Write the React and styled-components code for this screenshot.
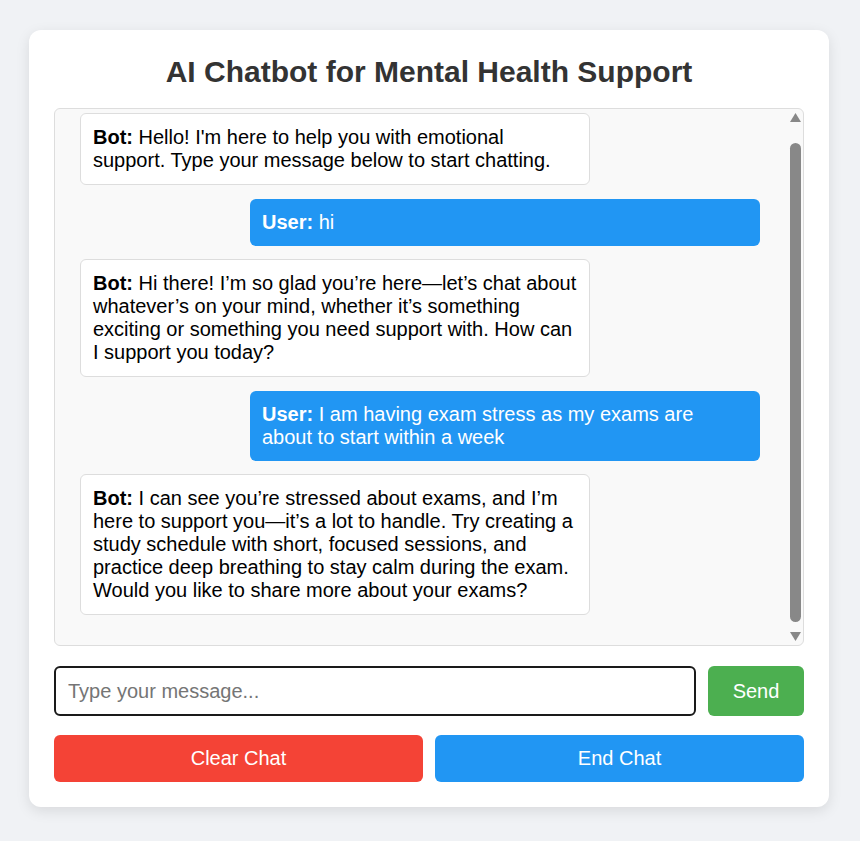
import React, { useEffect, useRef } from 'react'
import styled, { createGlobalStyle } from 'styled-components'

const GlobalStyle = createGlobalStyle`
  html, body {
    margin: 0;
    padding: 0;
    background: #f0f2f5;
    font-family: "Liberation Sans", Arial, sans-serif;
  }
`

const Page = styled.div`
  padding: 30px 2px 30px 0;
`

const Card = styled.div`
  width: 800px;
  margin: 0 auto;
  box-sizing: border-box;
  padding: 25px;
  background: #fff;
  border-radius: 12px;
  box-shadow: 0 4px 14px rgba(0, 0, 0, 0.1);
`

const Title = styled.h1`
  margin: 0 0 19px;
  text-align: center;
  font-size: 30px;
  font-weight: bold;
  color: #333;
`

const ChatPanel = styled.div`
  height: 538px;
  box-sizing: border-box;
  display: flex;
  border: 1px solid #ddd;
  border-radius: 6px;
  background: #f9f9f9;
  overflow: hidden;
`

const MessageList = styled.div`
  flex: 1;
  overflow: hidden;
  padding: 27px 28px 30px 25px;
  display: flex;
  flex-direction: column;
  gap: 13.5px;
`

// hand-drawn scrollbar: the headless browser hides native ones
const Rail = styled.div`
  width: 15px;
  box-sizing: border-box;
  padding-right: 1px;
  flex-shrink: 0;
  display: flex;
  flex-direction: column;
  align-items: center;
`

const RailArrow = styled.div`
  height: 17px;
  display: flex;
  align-items: center;
  justify-content: center;
  flex-shrink: 0;
`

const Thumb = styled.div`
  flex: 1;
  width: 11px;
  margin: 17px 0 6px;
  border-radius: 6px;
  background: #888;
`

const Message = styled.div`
  width: 75%;
  flex-shrink: 0;
  box-sizing: border-box;
  padding: 12px;
  border-radius: 6px;
  font-size: 20px;
  line-height: 23px;
  align-self: ${(p) => (p.$user ? 'flex-end' : 'flex-start')};
  background: ${(p) => (p.$user ? '#2196f3' : '#fff')};
  color: ${(p) => (p.$user ? '#fff' : '#000')};
  border: ${(p) => (p.$user ? 'none' : '1px solid #ddd')};

  strong {
    font-weight: bold;
  }
`

const InputRow = styled.div`
  display: flex;
  gap: 12px;
  margin-top: 20px;
`

const TextInput = styled.input`
  flex: 1;
  height: 50px;
  box-sizing: border-box;
  padding: 0 12px;
  border: 2px solid #1a1a1a;
  border-radius: 6px;
  font-family: inherit;
  font-size: 20px;
  color: #000;
  outline: none;

  &::placeholder {
    color: #757575;
  }
`

const Button = styled.button`
  height: ${(p) => (p.$tall ? '50px' : '47px')};
  border: none;
  border-radius: 6px;
  background: ${(p) => p.$color};
  color: #fff;
  font-family: inherit;
  font-size: 20px;
  cursor: pointer;
`

const SendButton = styled(Button)`
  width: 96px;
`

const ActionRow = styled.div`
  display: grid;
  grid-template-columns: 1fr 1fr;
  gap: 12px;
  margin-top: 19px;
`

const messages = [
  { user: false, text: "Hello! I'm here to help you with emotional support. Type your message below to start chatting." },
  { user: true, text: 'hi' },
  { user: false, text: 'Hi there! I’m so glad you’re here—let’s chat about whatever’s on your mind, whether it’s something exciting or something you need support with. How can I support you today?' },
  { user: true, text: 'I am having exam stress as my exams are about to start within a week' },
  { user: false, text: 'I can see you’re stressed about exams, and I’m here to support you—it’s a lot to handle. Try creating a study schedule with short, focused sessions, and practice deep breathing to stay calm during the exam. Would you like to share more about your exams?' },
]

const Triangle = ({ down }) => (
  <svg width="11" height="9" viewBox="0 0 11 9">
    <polygon points={down ? '0,0 11,0 5.5,9' : '0,9 11,9 5.5,0'} fill="#888" />
  </svg>
)

export default function App() {
  const listRef = useRef(null)

  useEffect(() => {
    if (listRef.current) listRef.current.scrollTop = listRef.current.scrollHeight
  }, [])

  return (
    <Page>
      <GlobalStyle />
      <Card>
        <Title>AI Chatbot for Mental Health Support</Title>
        <ChatPanel>
          <MessageList ref={listRef}>
            {messages.map((m, i) => (
              <Message key={i} $user={m.user}>
                <strong>{m.user ? 'User:' : 'Bot:'}</strong> {m.text}
              </Message>
            ))}
          </MessageList>
          <Rail>
            <RailArrow><Triangle /></RailArrow>
            <Thumb />
            <RailArrow><Triangle down /></RailArrow>
          </Rail>
        </ChatPanel>
        <InputRow>
          <TextInput placeholder="Type your message..." />
          <SendButton $tall $color="#4caf50">Send</SendButton>
        </InputRow>
        <ActionRow>
          <Button $color="#f44336">Clear Chat</Button>
          <Button $color="#2196f3">End Chat</Button>
        </ActionRow>
      </Card>
    </Page>
  )
}
